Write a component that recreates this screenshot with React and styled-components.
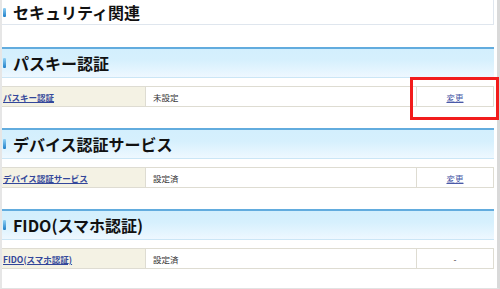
import styled, { createGlobalStyle } from 'styled-components'

const GlobalStyle = createGlobalStyle`
  html, body {
    margin: 0;
    padding: 0;
    background: #ffffff;
  }
  body {
    font-family: "Noto Sans CJK JP", "Noto Sans", "Liberation Sans", sans-serif;
    color: #222;
  }
`

const Page = styled.div`
  width: 492px;
  height: 288px;
  border-left: 2px solid #e6e6e6;
  border-right: 3px solid #d9d9d9;
  border-bottom: 1px solid #e2e2e2;
  padding-right: 3px;
  overflow: hidden;
`

const TitleBox = styled.div`
  margin-top: -1px;
  height: 26px;
  border: 1px solid #dfe6ee;
  border-left: none;
  display: flex;
  align-items: center;
  gap: 7px;
  padding-left: 1px;
  box-sizing: border-box;
`

const Marker = styled.span`
  display: block;
  width: 3px;
  height: ${(p) => p.$h}px;
  border-radius: 1px;
  background: linear-gradient(#8fd0f5, #1f7fc8);
`

const Title = styled.h1`
  margin: 0;
  font-size: 16px;
  font-weight: 600;
  line-height: 1;
  color: #111;
`

const Section = styled.section`
  margin-top: ${(p) => p.$top}px;
`

const Band = styled.div`
  height: 31px;
  box-sizing: border-box;
  border-top: 2px solid #62acde;
  border-bottom: 1px solid #cbe6f6;
  background: linear-gradient(#d3effd 0%, #d6f0fd 40%, #eef8ff 100%);
  display: flex;
  align-items: center;
  gap: 7px;
  padding-left: 1px;
`

const Heading = styled.h2`
  margin: 0;
  font-size: 16px;
  font-weight: 700;
  line-height: 1;
  color: #111;
`

const Row = styled.div`
  margin-top: 8px;
  display: grid;
  grid-template-columns: 143px 271px 1fr;
  height: 21px;
  box-sizing: border-box;
  border: 1px solid #dedcd2;
  border-left: none;
  font-size: 8.5px;
`

const Cell = styled.div`
  display: flex;
  align-items: center;
  justify-content: ${(p) => (p.$center ? 'center' : 'flex-start')};
  padding-left: ${(p) => (p.$center ? 0 : p.$pad)}px;
  background: ${(p) => p.$bg || '#ffffff'};
  border-left: ${(p) => (p.$first ? 'none' : '1px solid #dedcd2')};
  color: #333;
`

const Link = styled.a`
  color: ${(p) => p.$color || '#33479a'};
  font-weight: ${(p) => p.$weight || 400};
  text-decoration: underline;
  cursor: pointer;
`

const Highlight = styled.div`
  position: absolute;
  left: 410px;
  top: 77px;
  width: 89px;
  height: 43px;
  box-sizing: border-box;
  border: 3px solid #f21c1c;
  pointer-events: none;
`

const rows = [
  { head: 'パスキー認証', label: 'パスキー認証', value: '未設定', action: '変更', top: 22 },
  { head: 'デバイス認証サービス', label: 'デバイス認証サービス', value: '設定済', action: '変更', top: 21 },
  { head: 'FIDO(スマホ認証)', label: 'FIDO(スマホ認証)', value: '設定済', action: '-', top: 21 },
]

export default function App() {
  return (
    <>
      <GlobalStyle />
      <Page>
        <TitleBox>
          <Marker $h={9} />
          <Title>セキュリティ関連</Title>
        </TitleBox>
        {rows.map((r) => (
          <Section key={r.head} $top={r.top}>
            <Band>
              <Marker $h={10} />
              <Heading>{r.head}</Heading>
            </Band>
            <Row>
              <Cell $first $bg="#f4f2e4" $pad={1}>
                <Link $weight={600}>{r.label}</Link>
              </Cell>
              <Cell $pad={7}>{r.value}</Cell>
              <Cell $center>
                {r.action === '-' ? r.action : <Link $color="#4a5aa8">{r.action}</Link>}
              </Cell>
            </Row>
          </Section>
        ))}
      </Page>
      <Highlight />
    </>
  )
}
